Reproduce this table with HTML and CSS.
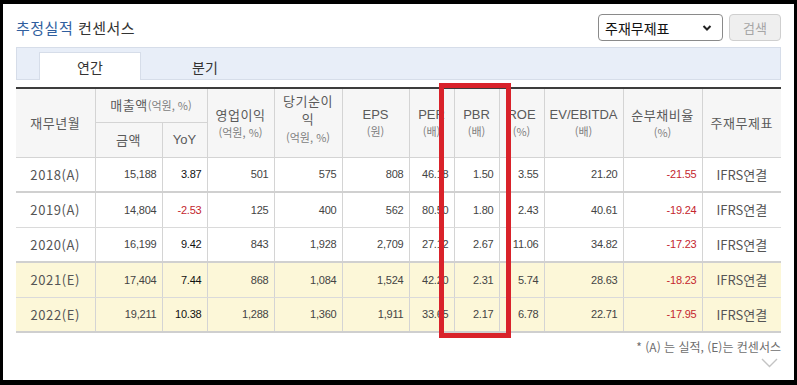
FILE: index.html
```html
<!DOCTYPE html>
<html lang="ko">
<head>
<meta charset="utf-8">
<title>추정실적 컨센서스</title>
<link rel="stylesheet" href="styles.css">
</head>
<body>
<div class="frame">
  <div class="topbar">
    <h2 class="title"><span class="title-strong">추정실적</span> 컨센서스</h2>
    <div class="controls">
      <div class="select">
        <span>주재무제표</span>
        <svg class="select-arrow" width="10" height="8" viewBox="0 0 10 8"><polyline points="1.5,2 5,5.5 8.5,2" fill="none" stroke="#222" stroke-width="2"/></svg>
      </div>
      <div class="btn">검색</div>
    </div>
  </div>

  <div class="tabs">
    <div class="tab active">연간</div>
    <div class="tab">분기</div>
  </div>

  <table class="grid">
    <colgroup>
      <col style="width:79px"><col style="width:67px"><col style="width:45px"><col style="width:67px"><col style="width:68px"><col style="width:67px"><col style="width:45px"><col style="width:45px"><col style="width:45px"><col style="width:79px"><col style="width:79px"><col style="width:79px">
    </colgroup>
    <thead>
      <tr class="h1">
        <th rowspan="2">재무년월</th>
        <th colspan="2">매출액<span class="sub">(억원, %)</span></th>
        <th rowspan="2"><span class="ln">영업이익</span><span class="ln sub">(억원, %)</span></th>
        <th rowspan="2" class="three"><span class="ln">당기순이</span><span class="ln">익</span><span class="ln sub">(억원, %)</span></th>
        <th rowspan="2"><span class="ln en">EPS</span><span class="ln sub">(원)</span></th>
        <th rowspan="2"><span class="ln en">PER</span><span class="ln sub">(배)</span></th>
        <th rowspan="2"><span class="ln en">PBR</span><span class="ln sub">(배)</span></th>
        <th rowspan="2"><span class="ln en">ROE</span><span class="ln sub">(%)</span></th>
        <th rowspan="2"><span class="ln en">EV/EBITDA</span><span class="ln sub">(배)</span></th>
        <th rowspan="2"><span class="ln">순부채비율</span><span class="ln sub">(%)</span></th>
        <th rowspan="2">주재무제표</th>
      </tr>
      <tr class="h2">
        <th>금액</th>
        <th><span class="en">YoY</span></th>
      </tr>
    </thead>
    <tbody>
      <tr class="sep">
        <td class="yr">2018(A)</td><td>15,188</td><td class="yoy">3.87</td><td>501</td><td>575</td><td>808</td><td>46.18</td><td>1.50</td><td>3.55</td><td>21.20</td><td class="neg">-21.55</td><td class="std">IFRS연결</td>
      </tr>
      <tr>
        <td class="yr">2019(A)</td><td>14,804</td><td class="neg">-2.53</td><td>125</td><td>400</td><td>562</td><td>80.50</td><td>1.80</td><td>2.43</td><td>40.61</td><td class="neg">-19.24</td><td class="std">IFRS연결</td>
      </tr>
      <tr class="sep">
        <td class="yr">2020(A)</td><td>16,199</td><td class="yoy">9.42</td><td>843</td><td>1,928</td><td>2,709</td><td>27.12</td><td>2.67</td><td>11.06</td><td>34.82</td><td class="neg">-17.23</td><td class="std">IFRS연결</td>
      </tr>
      <tr class="est">
        <td class="yr">2021(E)</td><td>17,404</td><td class="yoy">7.44</td><td>868</td><td>1,084</td><td>1,524</td><td>42.20</td><td>2.31</td><td>5.74</td><td>28.63</td><td class="neg">-18.23</td><td class="std">IFRS연결</td>
      </tr>
      <tr class="est last">
        <td class="yr">2022(E)</td><td>19,211</td><td class="yoy">10.38</td><td>1,288</td><td>1,360</td><td>1,911</td><td>33.65</td><td>2.17</td><td>6.78</td><td>22.71</td><td class="neg">-17.95</td><td class="std">IFRS연결</td>
      </tr>
    </tbody>
  </table>

  <p class="note">* (A) 는 실적, (E)는 컨센서스</p>
  <div class="more">
    <svg width="17" height="10" viewBox="0 0 17 10"><polyline points="1,1 8.5,8.5 16,1" fill="none" stroke="#c4c4c4" stroke-width="1.4"/></svg>
  </div>

  <div class="highlight"></div>
</div>
</body>
</html>
```

FILE: styles.css
```css
html, body {
  margin: 0;
  padding: 0;
  background: #000;
}

body {
  width: 797px;
  height: 385px;
  overflow: hidden;
  font-family: "Noto Sans CJK KR", "Liberation Sans", sans-serif;
}

.frame {
  position: relative;
  margin: 4px 3px 0 3px;
  width: 791px;
  height: 376px;
  background: #fff;
  box-sizing: border-box;
  padding: 10px 13px 0 13px;
}

.topbar {
  display: flex;
  justify-content: space-between;
  align-items: flex-start;
  height: 27px;
}

.title {
  margin: 0;
  padding-top: 5px;
  font-size: 15px;
  font-weight: normal;
  line-height: 18px;
  color: #333;
  letter-spacing: 0.5px;
}

.title-strong {
  color: #2f5e9e;
}

.controls {
  display: flex;
  gap: 6px;
}

.select {
  box-sizing: border-box;
  width: 125px;
  height: 27px;
  border: 1px solid #8a8a8a;
  border-radius: 4px;
  display: flex;
  align-items: center;
  justify-content: space-between;
  padding: 0 10px 0 6px;
  font-size: 14px;
  color: #111;
}

.select-arrow {
  display: block;
}

.btn {
  box-sizing: border-box;
  width: 52px;
  height: 27px;
  border: 1px solid #cfcfcf;
  border-radius: 4px;
  background: #efefef;
  color: #a6a6a6;
  font-size: 13px;
  display: flex;
  align-items: center;
  justify-content: center;
}

.tabs {
  margin-top: 6px;
  box-sizing: border-box;
  height: 33px;
  background: #e8eef8;
  border: 1px solid #d6dde9;
  display: flex;
  align-items: flex-end;
  padding-left: 22px;
}

.tab {
  box-sizing: border-box;
  width: 102px;
  height: 27px;
  display: flex;
  align-items: center;
  justify-content: center;
  font-size: 14px;
  color: #333;
  margin-bottom: -1px;
  padding-top: 1px;
}

.tab + .tab {
  margin-left: 13px;
}

.tab.active {
  background: #fff;
  border: 1px solid #d6dde9;
  border-bottom: none;
  height: 28px;
}

.grid {
  margin-top: 7px;
  width: 765px;
  table-layout: fixed;
  border-collapse: collapse;
  border-top: 2px solid #3c3c3c;
}

.grid th {
  background: #f6f6f6;
  font-weight: normal;
  color: #5a5a5a;
  font-size: 13px;
  line-height: 16px;
  text-align: center;
  border: 1px solid #d4d4d4;
  border-top: none;
  padding: 0;
  letter-spacing: 0.5px;
}

.grid th .ln {
  display: block;
  height: 19px;
  line-height: 19px;
}

.grid th .ln.en {
  height: 17px;
  line-height: 17px;
}

.grid th .ln.sub {
  height: 17px;
  line-height: 17px;
}

.grid th.three {
  padding-bottom: 8px;
}

.grid th.three .ln {
  height: 18px;
  line-height: 18px;
}

.grid th:first-child {
  border-left: none;
}

.grid tr.h1 th:last-child {
  border-right: none;
}

.grid tr.h1 {
  height: 34px;
}

.grid tr.h2 {
  height: 35px;
}

.grid .sub {
  font-size: 11px;
  color: #808080;
  letter-spacing: 0;
}

.grid .en {
  font-family: "Liberation Sans", sans-serif;
  font-size: 13px;
  letter-spacing: 0;
}

.grid td {
  font-family: "Liberation Sans", sans-serif;
  font-size: 11px;
  color: #444;
  text-align: right;
  padding: 0 5px 0 0;
  border-left: 1px solid #d4d4d4;
  border-bottom: 1px solid #dadada;
  letter-spacing: -0.2px;
  white-space: nowrap;
}

.grid tbody tr {
  height: 35px;
}

.grid td:first-child {
  border-left: none;
}

.grid td.yr {
  font-family: "Noto Sans CJK KR", sans-serif;
  font-size: 13px;
  text-align: center;
  padding: 0;
  color: #555;
  letter-spacing: 0.6px;
}

.grid td.std {
  font-family: "Noto Sans CJK KR", sans-serif;
  font-size: 13px;
  text-align: center;
  padding: 0;
  color: #555;
  letter-spacing: 0;
}

.grid td.yoy {
  color: #111;
}

.grid td.neg {
  color: #c4262e;
}

.grid tr.sep td {
  border-bottom: 2px solid #d0d0d0;
}

.grid tr.est td {
  background: #fcf7d8;
}

.grid tr.last td {
  border-bottom: 2px solid #cfcfcf;
}

.note {
  margin: 6px 0 0 0;
  text-align: right;
  font-size: 12px;
  line-height: 16px;
  color: #6e6e6e;
}

.more {
  display: flex;
  justify-content: flex-end;
  padding-right: 3px;
  margin-top: 3px;
}

.more svg {
  display: block;
}

.highlight {
  position: absolute;
  left: 436px;
  top: 79px;
  width: 72px;
  height: 255px;
  box-sizing: border-box;
  border: 5px solid #d9222a;
  pointer-events: none;
}
```
